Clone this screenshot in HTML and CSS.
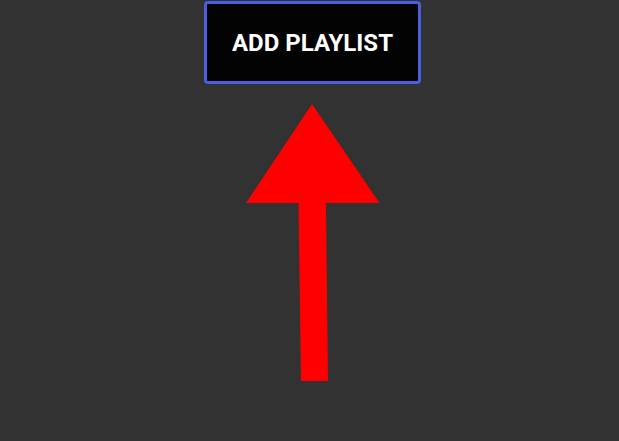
FILE: index.html
```html
<!DOCTYPE html>
<html>
<head>
<meta charset="utf-8">
<link rel="stylesheet" href="styles.css">
</head>
<body>
<div class="page">
  <div class="bar">
    <button class="add-btn">ADD PLAYLIST</button>
  </div>
  <svg class="arrow" width="619" height="300" viewBox="0 100 619 300" xmlns="http://www.w3.org/2000/svg">
    <polygon points="312,104 379.5,203 326,203 328,381 301,381 298.5,203 246,203" fill="#ff0000"/>
  </svg>
</div>
</body>
</html>
```
FILE: styles.css
```css
html, body {
  margin: 0;
  padding: 0;
  background: #323232;
  width: 619px;
  height: 441px;
  overflow: hidden;
}
.page {
  display: flex;
  flex-direction: column;
}
.bar {
  display: flex;
  justify-content: center;
  padding-left: 6px;
  padding-top: 1px;
}
.add-btn {
  box-sizing: border-box;
  width: 217px;
  height: 83px;
  border: 3px solid #4a5ee0;
  border-radius: 4px;
  background: #030303;
  color: #ffffff;
  font-family: Roboto, "Liberation Sans", sans-serif;
  font-weight: 700;
  font-size: 24px;
  letter-spacing: 0;
  padding: 0;
}
.arrow {
  display: block;
  margin-top: 16px;
}
```
